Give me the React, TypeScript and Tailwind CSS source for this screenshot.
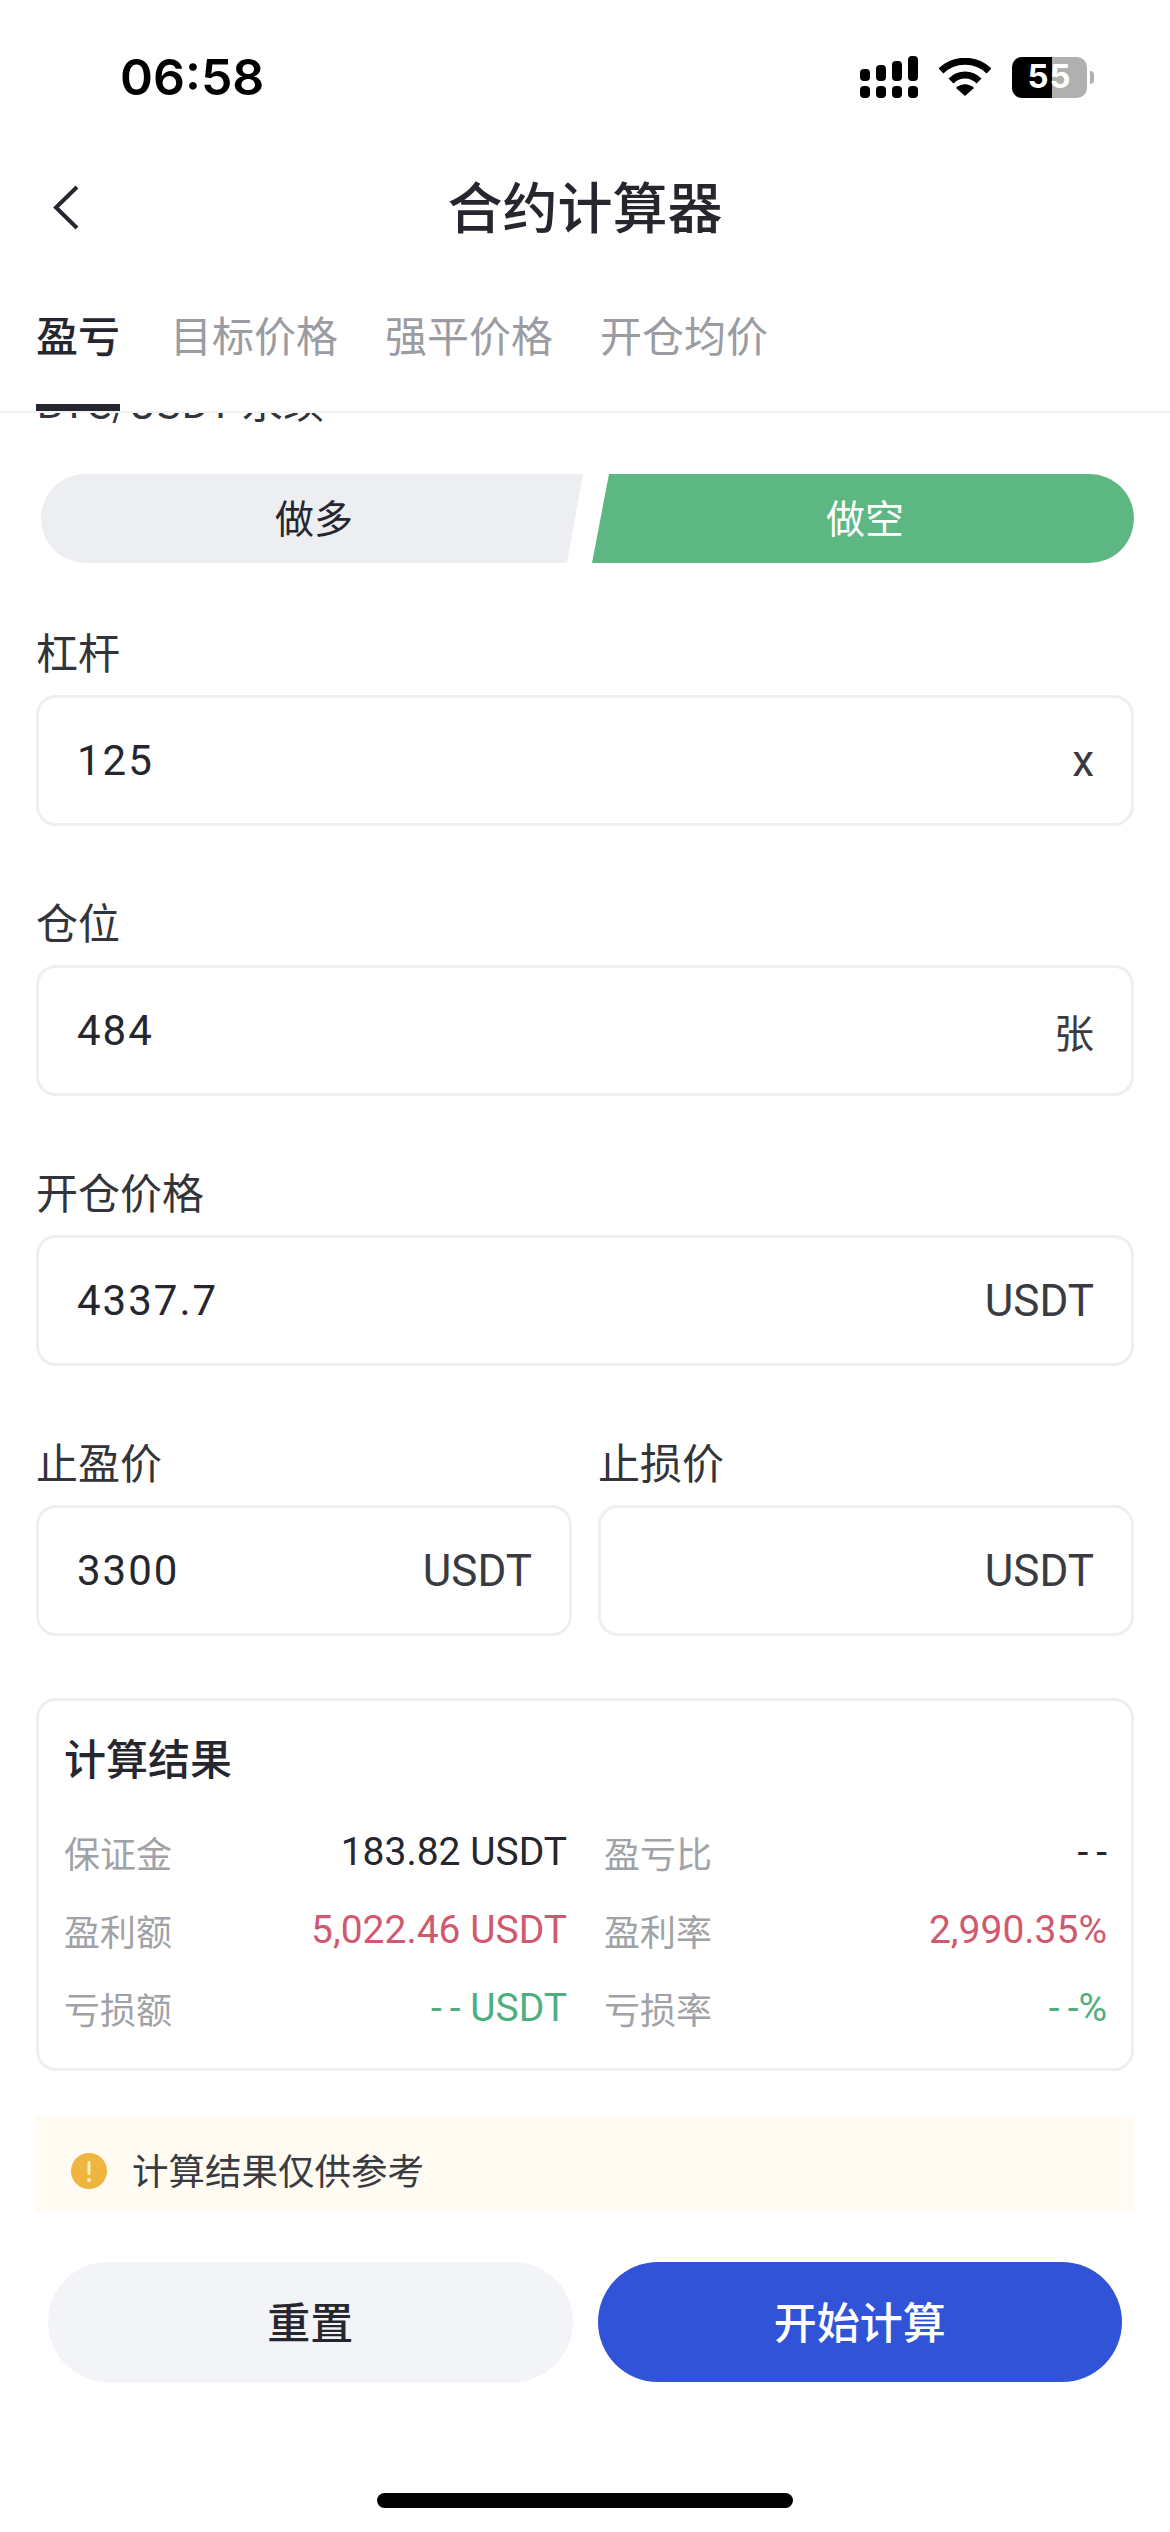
const sans = "font-['Noto_Sans_CJK_SC','Noto_Sans',sans-serif]";

const tabs = ["目标价格", "强平价格", "开仓均价"];

const results = [
  [
    { label: "保证金", value: "183.82 USDT", color: "text-[#26272e]" },
    { label: "盈亏比", value: "--", color: "text-[#26272e]" },
  ],
  [
    { label: "盈利额", value: "5,022.46 USDT", color: "text-[#cf5a70]" },
    { label: "盈利率", value: "2,990.35%", color: "text-[#cf5a70]" },
  ],
  [
    { label: "亏损额", value: "-- USDT", color: "text-[#4fae80]" },
    { label: "亏损率", value: "--%", color: "text-[#4fae80]" },
  ],
];

function Field({ label, value, unit }: { label: string; value?: string; unit: string }) {
  return (
    <div className="flex-1">
      <div className="h-[38px] mb-[25px] text-[42px] leading-[38px] text-[#33343a]">{label}</div>
      <div className="h-[131px] rounded-[20px] border-[3px] border-[#eeeff1] flex items-center justify-between pl-[38px] pr-[37px]">
        <span className="font-['Roboto'] text-[42px] tracking-[2px] text-[#26272e]">{value}</span>
        <span className={unit === "张" ? "text-[40px] text-[#3a3b41]" : "font-['Roboto'] text-[44px] text-[#3a3b41]"}>
          {unit}
        </span>
      </div>
    </div>
  );
}

function ResultValue({ value }: { value: string }) {
  // the dashes are wider and sit further apart than the font sets them
  if (!value.startsWith("--")) return <>{value}</>;
  return (
    <>
      <span className="tracking-[8px]">-</span>-{value.slice(2)}
    </>
  );
}

function StatusBar() {
  return (
    <div className="h-[154px] flex items-center justify-between pl-[120px] pr-[76px]">
      <span className="font-['Inter'] text-[50px] font-semibold text-black">06:58</span>
      <div className="flex items-center">
        <svg width="58" height="42" viewBox="0 0 58 42" className="mr-[21px]">
          <g fill="#000">
            <rect x="0" y="13" width="10" height="12" rx="4" />
            <rect x="16" y="9" width="10" height="16" rx="4" />
            <rect x="32" y="5" width="10" height="20" rx="4" />
            <rect x="48" y="0" width="10" height="25" rx="4" />
            <rect x="0" y="30" width="10" height="12" rx="4" />
            <rect x="16" y="30" width="10" height="12" rx="4" />
            <rect x="32" y="30" width="10" height="12" rx="4" />
            <rect x="48" y="30" width="10" height="12" rx="4" />
          </g>
        </svg>
        <svg width="52" height="38" viewBox="0 0 52 38" className="mr-[21px]">
          <path d="M2 13 C15 0 37 0 50 13" fill="none" stroke="#000" strokeWidth="7" />
          <path d="M12 23 C20 15 32 15 40 23" fill="none" stroke="#000" strokeWidth="7" />
          <path d="M17 30 C22 25 30 25 35 30 L26 38 Z" fill="#000" />
        </svg>
        <div className="relative w-[75px] h-[41px] rounded-[10px] overflow-hidden bg-[#b0b0b0] flex">
          <div className="w-[40px] bg-black" />
          <span className="absolute inset-0 flex items-center justify-center font-['Inter'] text-[33px] font-bold tracking-[1px] text-white">
            55
          </span>
        </div>
        <div className="w-[4px] h-[13px] ml-[3px] rounded-r-full bg-[#b0b0b0]" />
      </div>
    </div>
  );
}

export default function App() {
  return (
    <div className={`w-[1170px] h-[2532px] bg-white overflow-hidden ${sans}`}>
      <StatusBar />

      <div className="relative h-[106px] pb-[6px] flex items-center justify-center">
        <svg width="28" height="45" viewBox="0 0 28 45" className="absolute left-[52px] top-[31px]">
          <path d="M25 2 L4 22.5 L25 43" fill="none" stroke="#26272e" strokeWidth="4" />
        </svg>
        <h1 className="text-[55px] leading-none font-medium text-[#26272e]">合约计算器</h1>
      </div>

      <div className="h-[153px] pt-[54px] pl-[36px] flex border-b-[2px] border-[#f0f1f3]">
        <div className="relative h-full mr-[50px] text-[42px] leading-[40px] font-medium text-[#26272e]">
          盈亏
          <div className="absolute left-0 right-0 bottom-0 h-[7px] bg-[#26272e]" />
        </div>
        <div className="flex gap-[47px]">
          {tabs.map((tab) => (
            <div key={tab} className="text-[42px] leading-[40px] text-[#9a9ca1]">
              {tab}
            </div>
          ))}
        </div>
      </div>
      <div className="h-[10px] overflow-hidden pl-[36px]">
        <div className="-mt-[34px] text-[41px] leading-[43px] text-[#33343a]">BTC/USDT 永续</div>
      </div>

      <div className="mt-[51px] ml-[41px] mr-[36px] h-[89px] flex gap-[9px] text-[39px]">
        <div className="flex-1 rounded-l-[45px] bg-[#edeef2] text-[#26272e] pl-[4px] pb-[5px] flex items-center justify-center [clip-path:polygon(0_0,100%_0,calc(100%-16px)_100%,0_100%)]">
          做多
        </div>
        <div className="flex-1 rounded-r-[45px] bg-[#5cb783] text-white pl-[4px] pb-[5px] flex items-center justify-center [clip-path:polygon(17px_0,100%_0,100%_100%,0_100%)]">
          做空
        </div>
      </div>

      <div className="mt-[69px] mx-[36px] flex flex-col gap-[76px]">
        <Field label="杠杆" value="125" unit="x" />
        <Field label="仓位" value="484" unit="张" />
        <Field label="开仓价格" value="4337.7" unit="USDT" />
        <div className="flex gap-[26px]">
          <Field label="止盈价" value="3300" unit="USDT" />
          <Field label="止损价" unit="USDT" />
        </div>
      </div>

      <div className="mt-[62px] mx-[36px] h-[373px] rounded-[20px] border-[3px] border-[#eeeff1] pl-[25px] pr-[24px] pt-[31px]">
        <div className="text-[42px] leading-[50px] font-medium text-[#26272e]">计算结果</div>
        <div className="mt-[31px] flex flex-col">
          {results.map((row) => (
            <div key={row[0].label} className="h-[78px] grid grid-cols-[503px_1fr] gap-x-[37px] text-[36px]">
              {row.map((cell) => (
                <div key={cell.label} className="flex items-center justify-between">
                  <span className="text-[#a0a2a6]">{cell.label}</span>
                  <span className={`font-['Roboto'] text-[39px] ${cell.color}`}>
                    <ResultValue value={cell.value} />
                  </span>
                </div>
              ))}
            </div>
          ))}
        </div>
      </div>

      <div className="mt-[46px] mx-[36px] h-[95px] bg-[#fffbf3] flex items-center pl-[35px] pt-[12px]">
        <svg width="36" height="36" viewBox="0 0 36 36">
          <circle cx="18" cy="18" r="18" fill="#efb53f" />
          <rect x="16.5" y="8" width="3" height="14" rx="1.5" fill="#fdeebb" />
          <circle cx="18" cy="27" r="2" fill="#fdeebb" />
        </svg>
        <span className="ml-[25px] text-[36.5px] text-[#3a3b41]">计算结果仅供参考</span>
      </div>

      <div className="mt-[50px] mx-[48px] flex gap-[25px]">
        <button className="flex-1 h-[120px] pb-[4px] rounded-full bg-[#f2f4f7] text-[43px] font-medium text-[#26272e]">重置</button>
        <button className="flex-1 h-[120px] pb-[4px] rounded-full bg-[#3053d8] text-[43px] font-medium text-white">开始计算</button>
      </div>

      <div className="mt-[111px] mx-auto w-[416px] h-[15px] rounded-full bg-black" />
    </div>
  );
}
